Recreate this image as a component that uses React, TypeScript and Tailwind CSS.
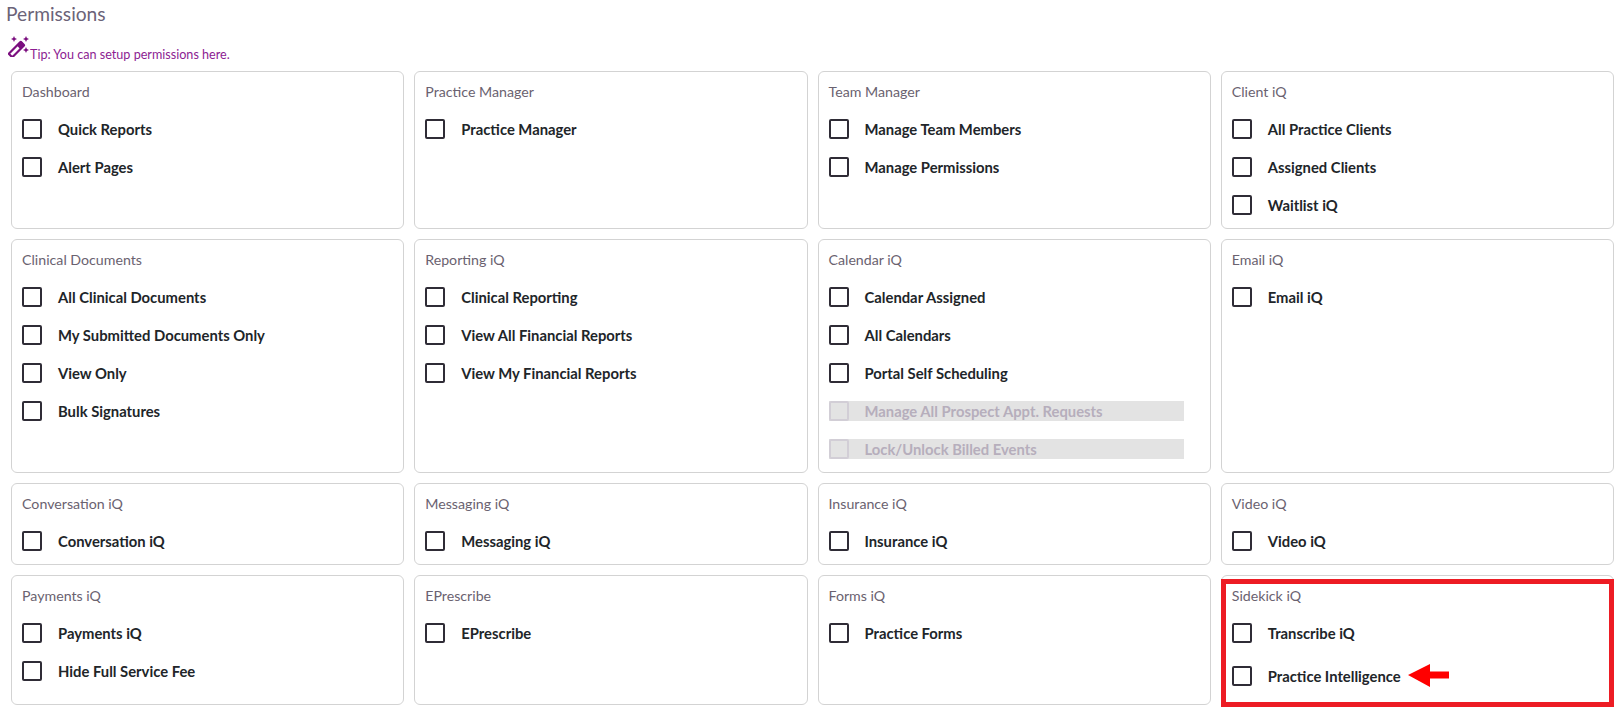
import React from 'react';

type Item = { label: string; disabled?: boolean };
type Section = { title: string; items: Item[] };

const toItems = (labels: string[]): Item[] => labels.map((label) => ({ label }));

const sections: Section[] = [
  { title: 'Dashboard', items: toItems(['Quick Reports', 'Alert Pages']) },
  { title: 'Practice Manager', items: toItems(['Practice Manager']) },
  { title: 'Team Manager', items: toItems(['Manage Team Members', 'Manage Permissions']) },
  { title: 'Client iQ', items: toItems(['All Practice Clients', 'Assigned Clients', 'Waitlist iQ']) },
  {
    title: 'Clinical Documents',
    items: toItems(['All Clinical Documents', 'My Submitted Documents Only', 'View Only', 'Bulk Signatures'])
  },
  {
    title: 'Reporting iQ',
    items: toItems(['Clinical Reporting', 'View All Financial Reports', 'View My Financial Reports'])
  },
  {
    title: 'Calendar iQ',
    items: [
      ...toItems(['Calendar Assigned', 'All Calendars', 'Portal Self Scheduling']),
      { label: 'Manage All Prospect Appt. Requests', disabled: true },
      { label: 'Lock/Unlock Billed Events', disabled: true }
    ]
  },
  { title: 'Email iQ', items: toItems(['Email iQ']) },
  { title: 'Conversation iQ', items: toItems(['Conversation iQ']) },
  { title: 'Messaging iQ', items: toItems(['Messaging iQ']) },
  { title: 'Insurance iQ', items: toItems(['Insurance iQ']) },
  { title: 'Video iQ', items: toItems(['Video iQ']) },
  { title: 'Payments iQ', items: toItems(['Payments iQ', 'Hide Full Service Fee']) },
  { title: 'EPrescribe', items: toItems(['EPrescribe']) },
  { title: 'Forms iQ', items: toItems(['Practice Forms']) }
];

const WandIcon = () => (
  <svg width="22" height="22" viewBox="0 0 22 22" className="shrink-0 mb-[5px]">
    <g transform="rotate(45 8.5 14.5)">
      <rect x="6" y="6" width="5" height="17" rx="0.8" fill="none" stroke="#7b0f7f" strokeWidth="2.2" />
      <rect x="6" y="5.5" width="5" height="6" fill="#7b0f7f" />
    </g>
    <path d="M6 1l.9 2.1L9 4l-2.1.9L6 7l-.9-2.1L3 4l2.1-.9z" fill="#7b0f7f" />
    <path d="M18 1l.9 2.1L21 4l-2.1.9L18 7l-.9-2.1L15 4l2.1-.9z" fill="#7b0f7f" />
    <path d="M18 12l.9 2.1 2.1.9-2.1.9-.9 2.1-.9-2.1-2.1-.9 2.1-.9z" fill="#7b0f7f" />
  </svg>
);

const Row = ({ item }: { item: Item }) => {
  if (item.disabled) {
    return (
      <div className="flex items-center h-5 w-[355px] bg-[#e3e3e3]">
        <span className="w-5 h-5 shrink-0 rounded-[2px] border-2 border-[#d2ced6]" />
        <span className="ml-4 text-[14.8px] font-bold text-[#b6aebc]">{item.label}</span>
      </div>
    );
  }
  return (
    <div className="flex items-center h-5">
      <span className="w-5 h-5 shrink-0 rounded-[2px] border-2 border-[#2f2c36]" />
      <span className="ml-4 text-[14.8px] font-bold text-[#212529]">{item.label}</span>
    </div>
  );
};

const Card = ({ section }: { section: Section }) => (
  <div className="rounded-md border border-[#d3d3d3] bg-white pl-[10px] pr-2 pt-[11px] pb-[13px]">
    <div className="h-[18px] leading-[18px] text-[14.2px] text-[#6a6270]">{section.title}</div>
    <div className="mt-[18px] flex flex-col gap-[18px]">
      {section.items.map((item) => (
        <Row key={item.label} item={item} />
      ))}
    </div>
  </div>
);

const SidekickCard = () => (
  <div className="relative rounded-md border border-[#d3d3d3] bg-white pl-[10px] pr-2 pt-[11px] pb-4">
    <div className="h-[18px] leading-[18px] text-[14.2px] text-[#6a6270]">Sidekick iQ</div>
    <div className="mt-[18px] flex flex-col gap-[21px]">
      <Row item={{ label: 'Transcribe iQ' }} />
      <div className="flex items-center">
        <Row item={{ label: 'Practice Intelligence' }} />
        <svg width="42" height="24" viewBox="0 0 42 24" className="ml-[7px] shrink-0">
          <path d="M0 11 L22 0 V7.5 H41 V14.5 H22 V23 Z" fill="#ff0000" />
        </svg>
      </div>
    </div>
    {/* anotacion roja encima de la tarjeta */}
    <div className="absolute -left-px -right-px top-[3px] -bottom-[3px] border-[5px] border-[#ed1c24] pointer-events-none" />
  </div>
);

const App: React.FC = () => {
  return (
    <div className="w-[1615px] h-[725px] bg-white overflow-hidden font-['Lato','Open_Sans',sans-serif]">
      <div className="pl-[6px] pt-[3px] h-[36px] text-[19.2px] leading-[22px] text-[#6b6378]">Permissions</div>
      <div className="flex items-end pl-2 h-[26px] text-[12.6px] leading-[14px] text-[#8c1c92]">
        <WandIcon />
        <span>Tip: You can setup permissions here.</span>
      </div>
      <div className="grid grid-cols-4 gap-x-[10px] gap-y-[10px] pl-[11px] pr-px mt-[9px]">
        {sections.map((section) => (
          <Card key={section.title} section={section} />
        ))}
        <SidekickCard />
      </div>
    </div>
  );
};

export default App;
